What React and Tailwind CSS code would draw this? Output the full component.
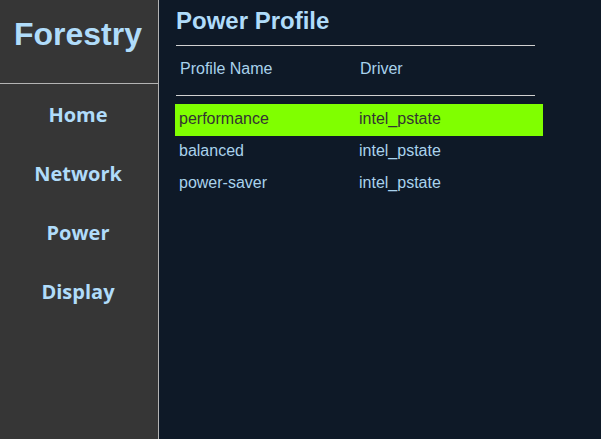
const navItems = ["Home", "Network", "Power", "Display"];

const profiles = [
  { name: "performance", driver: "intel_pstate", active: true },
  { name: "balanced", driver: "intel_pstate" },
  { name: "power-saver", driver: "intel_pstate" },
];

export default function App() {
  return (
    <div className="flex h-screen w-full bg-[#0e1927] font-['Liberation_Sans',Arial,sans-serif]">
      <aside className="flex w-[159px] shrink-0 flex-col border-r border-[#b4b4b4] bg-[#363636]">
        <div className="flex h-[84px] items-center justify-center border-b border-[#b4b4b4] pb-[16px] pr-[2px]">
          <span className="text-[32px] font-bold leading-none text-[#b0dcfa]">Forestry</span>
        </div>
        <nav className="flex flex-col pr-[2px] pt-[1px]">
          {navItems.map((item) => (
            <div
              key={item}
              className="flex h-[59px] items-center justify-center font-['Open_Sans','Noto_Sans',sans-serif] text-[20px] font-bold leading-none text-[#b0dcfa]"
            >
              {item}
            </div>
          ))}
        </nav>
      </aside>

      <main className="flex-1 pl-[17px] pt-[9px]">
        <h1 className="text-[24px] font-bold leading-none text-[#b0dcfa]">Power Profile</h1>
        <div className="mt-[12px] h-px w-[359px] bg-[#d0d0d0]" />
        <div className="flex h-[49px] pl-[4px] pt-[15px] text-[16px] leading-none text-[#a9d2ec]">
          <span className="w-[180px]">Profile Name</span>
          <span>Driver</span>
        </div>
        <div className="h-px w-[359px] bg-[#d0d0d0]" />
        <div className="ml-[-1px] mt-[8px] flex w-[368px] flex-col">
          {profiles.map((p) => (
            <div
              key={p.name}
              className={
                p.active
                  ? "flex h-[32px] bg-[#80ff00] pl-[4px] pt-[7px] text-[16px] leading-none text-[#333333]"
                  : "flex h-[32px] pl-[4px] pt-[7px] text-[16px] leading-none text-[#a9d2ec]"
              }
            >
              <span className="w-[180px]">{p.name}</span>
              <span>{p.driver}</span>
            </div>
          ))}
        </div>
      </main>
    </div>
  );
}
